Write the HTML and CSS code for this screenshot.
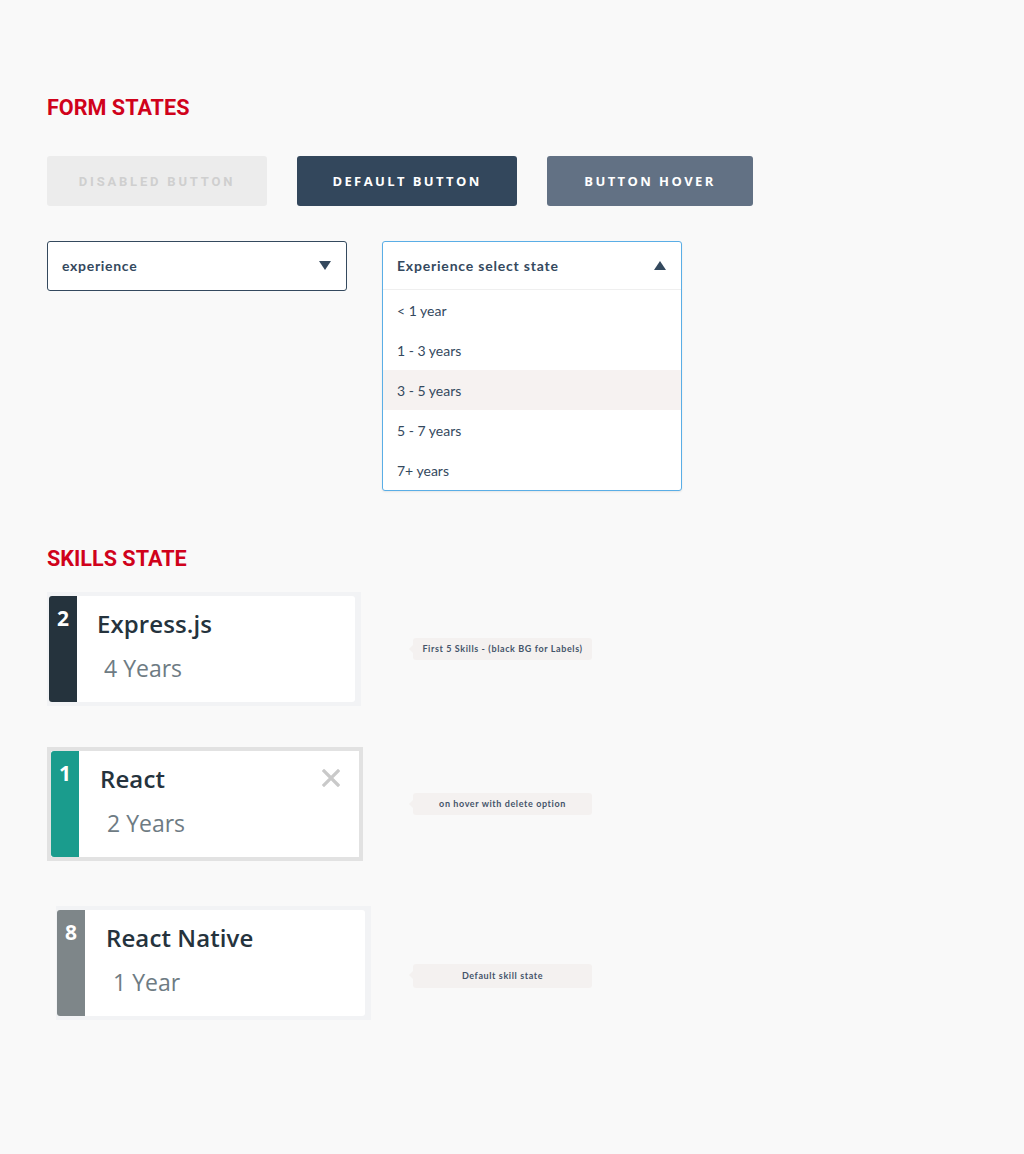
FILE: index.html
```html
<!DOCTYPE html>
<html>
<head>
<meta charset="utf-8">
<link rel="stylesheet" href="styles.css">
</head>
<body>
<main class="page">
  <h2 class="section-title">FORM STATES</h2>
  <div class="buttons">
    <button class="btn btn-disabled">DISABLED BUTTON</button>
    <button class="btn btn-default">DEFAULT BUTTON</button>
    <button class="btn btn-hover">BUTTON HOVER</button>
  </div>
  <div class="selects">
    <div class="select select-closed">
      <span class="select-label">experience</span>
      <svg class="caret" width="12" height="9" viewBox="0 0 12 9"><path d="M0 0H12L6 9Z" fill="#34495e"/></svg>
    </div>
    <div class="select select-open">
      <div class="select-head">
        <span class="select-label select-label-open">Experience select state</span>
        <svg class="caret" width="12" height="9" viewBox="0 0 12 9"><path d="M0 9H12L6 0Z" fill="#34495e"/></svg>
      </div>
      <ul class="options">
        <li class="option">&lt; 1 year</li>
        <li class="option">1 - 3 years</li>
        <li class="option option-active">3 - 5 years</li>
        <li class="option">5 - 7 years</li>
        <li class="option">7+ years</li>
      </ul>
    </div>
  </div>

  <h2 class="section-title skills-title">SKILLS STATE</h2>

  <div class="skill-row row-1">
    <div class="skill-slot">
      <div class="frame frame-soft">
        <div class="skill-card">
          <div class="rank rank-dark">2</div>
          <div class="skill-body">
            <div class="skill-name">Express.js</div>
            <div class="skill-years">4 Years</div>
          </div>
        </div>
      </div>
    </div>
    <div class="note">First 5 Skills - (black BG for Labels)</div>
  </div>

  <div class="skill-row row-2">
    <div class="skill-slot">
      <div class="frame frame-hover">
        <div class="skill-card">
          <div class="rank rank-teal">1</div>
          <div class="skill-body">
            <div class="skill-name">React</div>
            <div class="skill-years">2 Years</div>
          </div>
          <svg class="delete" width="18" height="18" viewBox="0 0 18 18"><path d="M2 2L16 16M16 2L2 16" stroke="#c9c9c9" stroke-width="3.2" stroke-linecap="square"/></svg>
        </div>
      </div>
    </div>
    <div class="note">on hover with delete option</div>
  </div>

  <div class="skill-row row-3">
    <div class="skill-slot slot-shift">
      <div class="frame frame-soft frame-3">
        <div class="skill-card">
          <div class="rank rank-gray">8</div>
          <div class="skill-body">
            <div class="skill-name">React Native</div>
            <div class="skill-years">1 Year</div>
          </div>
        </div>
      </div>
    </div>
    <div class="note note-low">Default skill state</div>
  </div>
</main>
</body>
</html>
```

FILE: styles.css
```css
* { box-sizing: border-box; }
html, body { margin: 0; padding: 0; }
body {
  background: #f9f9f9;
  font-family: "Lato", "Open Sans", sans-serif;
  color: #34495e;
  width: 1024px;
  min-height: 1154px;
}
.page {
  padding: 96px 0 0 47px;
}
.section-title {
  margin: 0;
  font-family: "Roboto", sans-serif;
  font-weight: 700;
  font-size: 21.6px;
  line-height: 24px;
  color: #d0021b;
  letter-spacing: 0;
}
.buttons {
  display: flex;
  gap: 30px;
  margin-top: 36px;
}
.btn {
  height: 50px;
  border: none;
  border-radius: 3px;
  font-family: "Open Sans", sans-serif;
  font-weight: 700;
  font-size: 13px;
  letter-spacing: 2.4px;
  padding: 0;
  cursor: default;
}
.btn-disabled {
  width: 220px;
  background: #ececec;
  color: #cfcfcf;
  font-family: "Roboto", sans-serif;
  letter-spacing: 2.8px;
}
.btn-default {
  width: 220px;
  background: #33475c;
  color: #ffffff;
}
.btn-hover {
  width: 206px;
  background: #627184;
  color: #ffffff;
}
.selects {
  display: flex;
  align-items: flex-start;
  gap: 35px;
  margin-top: 35px;
}
.select {
  width: 300px;
  background: #ffffff;
  border-radius: 3px;
}
.select-closed {
  height: 50px;
  border: 1px solid #34495e;
  display: flex;
  align-items: center;
  justify-content: space-between;
  padding: 0 15px 1px 14px;
}
.select-open {
  border: 1px solid #5aaee6;
  box-shadow: 0 1px 2px rgba(0,0,0,0.08);
}
.select-head {
  height: 48px;
  display: flex;
  align-items: center;
  justify-content: space-between;
  padding: 0 15px 0 14px;
  border-bottom: 1px solid #efefef;
}
.select-label {
  font-family: "Lato", sans-serif;
  font-weight: 700;
  font-size: 14px;
  color: #34495e;
  letter-spacing: 0.7px;
}
.select-label-open {
  letter-spacing: 0.8px;
}
.caret { display: block; }
.options {
  list-style: none;
  margin: 0;
  padding: 0;
}
.option {
  height: 40px;
  line-height: 42px;
  padding-left: 14px;
  font-family: "Lato", sans-serif;
  font-size: 14px;
  color: #34495e;
}
.option-active {
  background: #f6f2f1;
}
.skills-title {
  margin-top: 56px;
}
.skill-row {
  display: flex;
  align-items: center;
}
.row-1 { margin-top: 21px; }
.row-2 { margin-top: 41px; }
.row-3 { margin-top: 45px; }
.skill-slot {
  width: 366px;
}
.slot-shift {
  padding-left: 9px;
}
.frame {
  display: inline-block;
}
.frame-soft {
  background: #f2f3f5;
  padding: 4px 6px 4px 2px;
}
.frame-3 {
  padding: 4px 6px 4px 1px;
}
.frame-hover {
  background: #ffffff;
  border: 4px solid #e2e2e2;
}
.skill-card {
  position: relative;
  display: flex;
  width: 306px;
  height: 106px;
  background: #ffffff;
  border-radius: 3px;
  overflow: hidden;
}
.frame-hover .skill-card,
.frame-3 .skill-card { width: 308px; }
.rank {
  width: 28px;
  flex: none;
  color: #ffffff;
  font-family: "Open Sans", sans-serif;
  font-weight: 700;
  font-size: 21px;
  line-height: 24px;
  text-align: center;
  padding-top: 10px;
}
.rank-dark { background: #25333d; }
.rank-teal { background: #1a9c8d; }
.rank-gray { background: #7e8689; }
.skill-body {
  padding: 12px 0 0 20px;
}
.frame-hover .skill-body { padding-left: 21px; }
.frame-3 .skill-body { padding-left: 21px; }
.skill-name {
  font-family: "Open Sans", sans-serif;
  font-weight: 600;
  font-size: 24px;
  line-height: 32px;
  color: #25333d;
  letter-spacing: 0.1px;
}
.skill-years {
  margin-top: 12px;
  padding-left: 7px;
  font-family: "Open Sans", sans-serif;
  font-weight: 400;
  font-size: 23px;
  line-height: 32px;
  color: #6e7b83;
}
.delete {
  position: absolute;
  top: 18px;
  right: 19px;
}
.note {
  position: relative;
  width: 179px;
  height: 22px;
  line-height: 22px;
  background: #f4f1f0;
  border-radius: 3px;
  text-align: center;
  font-family: "Lato", sans-serif;
  font-weight: 700;
  font-size: 9px;
  color: #44546a;
  letter-spacing: 0.6px;
}
.note::before {
  content: "";
  position: absolute;
  left: -4px;
  top: 7px;
  border-top: 4px solid transparent;
  border-bottom: 4px solid transparent;
  border-right: 4px solid #f4f1f0;
}
.note-low {
  margin-top: 26px;
  height: 24px;
  line-height: 24px;
}
```
